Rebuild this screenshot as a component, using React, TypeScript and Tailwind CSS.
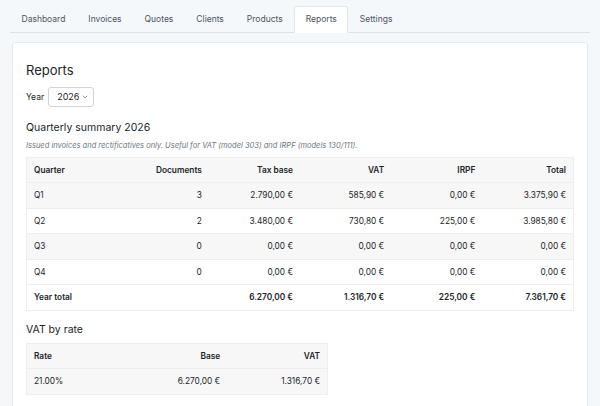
const tabs = ['Dashboard', 'Invoices', 'Quotes', 'Clients', 'Products', 'Reports', 'Settings'];

const quarters = [
  { q: 'Q1', docs: 3, base: '2.790,00 €', vat: '585,90 €', irpf: '0,00 €', total: '3.375,90 €' },
  { q: 'Q2', docs: 2, base: '3.480,00 €', vat: '730,80 €', irpf: '225,00 €', total: '3.985,80 €' },
  { q: 'Q3', docs: 0, base: '0,00 €', vat: '0,00 €', irpf: '0,00 €', total: '0,00 €' },
  { q: 'Q4', docs: 0, base: '0,00 €', vat: '0,00 €', irpf: '0,00 €', total: '0,00 €' },
];

export default function App() {
  return (
    <div
      className="min-h-[406px] bg-[#f5f8fb] px-[10px] pt-[6px] text-[#212529]"
      style={{ fontFamily: 'Inter, "Liberation Sans", sans-serif' }}
    >
      {/* Tabs */}
      <div className="flex border-b border-[#dfe3e8] text-[8.5px] text-[#4b5563]">
        {tabs.map((t) => (
          <div
            key={t}
            className={
              t === 'Reports'
                ? 'mb-[-1px] h-[27px] flex items-center px-[10.5px] bg-white border border-[#e3e7ec] border-b-white rounded-t-[3px] text-[#4a5568]'
                : 'h-[26px] flex items-center px-[11.5px]'
            }
          >
            {t}
          </div>
        ))}
      </div>

      {/* Card */}
      <div className="mt-[9px] mx-[2px] bg-white border border-[#e6eaee] rounded-[3px] px-[13px] pt-[15px] pb-[20px]">
        <h1 className="text-[13px] leading-[24px] text-[#212529]">Reports</h1>

        <div className="mt-[5px] flex items-center gap-[4px] text-[8.5px]">
          <span>Year</span>
          <div className="h-[20px] w-[46px] border border-[#ced4da] rounded-[3px] flex items-center justify-between pl-[8px] pr-[5px] text-[9px]">
            <span>2026</span>
            <svg width="6" height="4" viewBox="0 0 6 4" fill="none">
              <path d="M0.8 0.8l2.2 2.2 2.2-2.2" stroke="#8a9199" strokeWidth="0.9" />
            </svg>
          </div>
        </div>

        <h2 className="mt-[12px] text-[10.5px] leading-[18px]">Quarterly summary 2026</h2>
        <p className="mt-[3px] text-[7.5px] italic text-[#6c757d]">
          Issued invoices and rectificatives only. Useful for VAT (model 303) and IRPF (models 130/111).
        </p>

        <table className="mt-[6px] w-full table-fixed border border-[#eceef1] text-[8.3px]">
          <thead>
            <tr className="bg-[#f7f7f8] h-[25px]">
              <th className="text-left px-[7px] font-semibold">Quarter</th>
              <th className="text-right px-[7px] font-semibold">Documents</th>
              <th className="text-right px-[7px] font-semibold">Tax base</th>
              <th className="text-right px-[7px] font-semibold">VAT</th>
              <th className="text-right px-[7px] font-semibold">IRPF</th>
              <th className="text-right px-[7px] font-semibold">Total</th>
            </tr>
          </thead>
          <tbody>
            {quarters.map((r, i) => (
              <tr key={r.q} className={`h-[25.5px] border-t border-[#eceef1] ${i % 2 === 0 ? 'bg-[#f7f7f8]' : 'bg-white'}`}>
                <td className="px-[7px]">{r.q}</td>
                <td className="px-[7px] text-right">{r.docs}</td>
                <td className="px-[7px] text-right">{r.base}</td>
                <td className="px-[7px] text-right">{r.vat}</td>
                <td className="px-[7px] text-right">{r.irpf}</td>
                <td className="px-[7px] text-right">{r.total}</td>
              </tr>
            ))}
            <tr className="h-[25.5px] border-t border-[#eceef1] font-semibold">
              <td className="px-[7px]">Year total</td>
              <td className="px-[7px]"></td>
              <td className="px-[7px] text-right">6.270,00 €</td>
              <td className="px-[7px] text-right">1.316,70 €</td>
              <td className="px-[7px] text-right">225,00 €</td>
              <td className="px-[7px] text-right">7.361,70 €</td>
            </tr>
          </tbody>
        </table>

        <h2 className="mt-[10px] text-[10.5px] leading-[18px]">VAT by rate</h2>
        <table className="mt-[4px] w-[302px] table-fixed border border-[#eceef1] text-[8.3px]">
          <thead>
            <tr className="bg-[#f7f7f8] h-[25px]">
              <th className="text-left px-[7px] font-semibold">Rate</th>
              <th className="text-right px-[7px] font-semibold">Base</th>
              <th className="text-right px-[7px] font-semibold">VAT</th>
            </tr>
          </thead>
          <tbody>
            <tr className="h-[26px] border-t border-[#eceef1] bg-[#f7f7f8]">
              <td className="px-[7px]">21.00%</td>
              <td className="px-[7px] text-right">6.270,00 €</td>
              <td className="px-[7px] text-right">1.316,70 €</td>
            </tr>
          </tbody>
        </table>
      </div>
    </div>
  );
}
